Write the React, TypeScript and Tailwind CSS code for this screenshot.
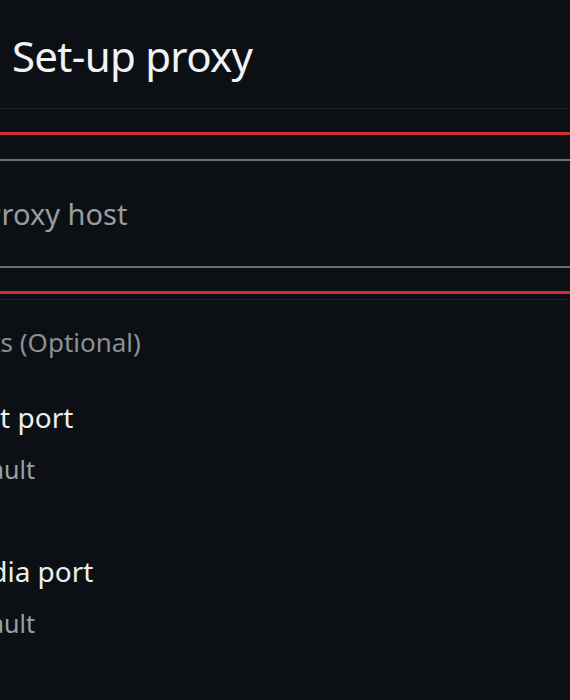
import React from 'react'

const rows = [
  { title: 'Host port', value: 'Default' },
  { title: 'Media port', value: 'Default' },
]

export default function App() {
  return (
    <div
      className="w-[570px] h-[700px] overflow-hidden bg-[#0c1014] text-white"
      style={{ fontFamily: '"Noto Sans", "Open Sans", sans-serif' }}
    >
      {/* header */}
      <div className="h-[109px] border-b border-[#1c2024] pl-[12px] pt-[31px]">
        <h1 className="text-[42px] leading-[50px] tracking-[-0.7px] font-normal text-[#f2f3f4]">Set-up proxy</h1>
      </div>

      {/* host field */}
      <div className="mt-[23px] h-[3px] bg-[#d42a36]" />
      <div className="mt-[24px] h-[2px] bg-[#6a6f74]" />
      <div className="h-[105px] flex items-center">
        <input
          readOnly
          placeholder="Proxy host"
          className="-ml-[16px] w-[586px] bg-transparent outline-none text-[29px] leading-[38px] placeholder:text-[#979ca1]"
        />
      </div>
      <div className="h-[2px] bg-[#6a6f74]" />
      <div className="mt-[23px] h-[3px] bg-[#d42a36]" />
      <div className="mt-[5px] h-px bg-[#1e2226]" />

      {/* ports */}
      <div className="-ml-[51px] pt-[25px]">
        <p className="text-[26px] leading-[34px] text-[#8b9094]">Ports (Optional)</p>
        <div className="mt-[40px] flex flex-col gap-[68px]">
          {rows.map(r => (
            <div key={r.title} className="flex flex-col gap-[18px]">
              <p className="text-[28px] leading-[36px] text-[#eceef0]">{r.title}</p>
              <p className="text-[25px] leading-[32px] text-[#9a9fa3]">{r.value}</p>
            </div>
          ))}
        </div>
      </div>
    </div>
  )
}
